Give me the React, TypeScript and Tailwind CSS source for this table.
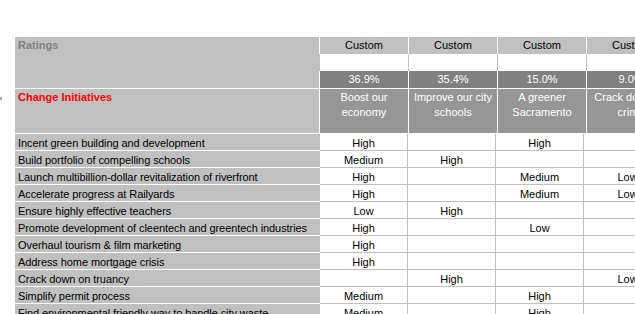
const COLUMNS = [
  { kind: 'Custom', pct: '36.9%', title: ['Boost our', 'economy'] },
  { kind: 'Custom', pct: '35.4%', title: ['Improve our city', 'schools'] },
  { kind: 'Custom', pct: '15.0%', title: ['A greener', 'Sacramento'] },
  { kind: 'Custom', pct: '9.0%', title: ['Crack down on', 'crime'] },
];

// 이니셔티브별 등급 (열 순서대로)
const ROWS: [string, string[]][] = [
  ['Incent green building and development', ['High', '', 'High', '']],
  ['Build portfolio of compelling schools', ['Medium', 'High', '', '']],
  ['Launch multibillion-dollar revitalization of riverfront', ['High', '', 'Medium', 'Low']],
  ['Accelerate progress at Railyards', ['High', '', 'Medium', 'Low']],
  ['Ensure highly effective teachers', ['Low', 'High', '', '']],
  ['Promote development of cleentech and greentech industries', ['High', '', 'Low', '']],
  ['Overhaul tourism & film marketing', ['High', '', '', '']],
  ['Address home mortgage crisis', ['High', '', '', '']],
  ['Crack down on truancy', ['', 'High', '', 'Low']],
  ['Simplify permit process', ['Medium', '', 'High', '']],
  ['Find environmental friendly way to handle city waste', ['Medium', '', 'High', '']],
];

function HeaderBlock() {
  return (
    <div className="flex flex-col">
      {/* Ratings 영역 */}
      <div className="flex">
        <div className="w-[304px] h-[51px] bg-[#c0c0c0] pl-[3px] pt-[1px] font-bold text-[#808080] leading-[14px]">
          Ratings
        </div>
        {COLUMNS.map((c, i) => (
          <div key={i} className="flex flex-col w-[89px] shrink-0 border-l border-white">
            <div className="h-[17px] bg-[#c0c0c0] text-center text-black leading-[17px]">{c.kind}</div>
            <div className="h-[17px] bg-white border-l border-[#c0c0c0] -ml-px"></div>
            <div className="h-[17px] bg-[#808080] text-center text-white leading-[17px]">{c.pct}</div>
          </div>
        ))}
      </div>
      <div className="h-px bg-white"></div>
      {/* 열 제목 */}
      <div className="flex">
        <div className="w-[304px] h-[44px] bg-[#c0c0c0] pl-[3px] font-bold text-[#ff0000] leading-[15px] pt-[1px]">
          Change Initiatives
        </div>
        {COLUMNS.map((c, i) => (
          <div
            key={i}
            className="w-[89px] shrink-0 h-[44px] border-l border-white bg-[#969696] text-center text-white leading-[15px] pt-[1px] whitespace-nowrap"
          >
            {c.title[0]}
            <br />
            {c.title[1]}
          </div>
        ))}
      </div>
      <div className="h-px bg-white"></div>
    </div>
  );
}

function DataRow({ label, values }: { label: string; values: string[] }) {
  return (
    <div className="flex">
      <div className="w-[305px] h-[17px] bg-[#c0c0c0] border-b border-white pl-[3px] pt-px leading-[16px] text-black whitespace-nowrap tracking-[-0.08px]">
        {label}
      </div>
      {values.map((v, i) => (
        <div
          key={i}
          className="w-[88px] shrink-0 h-[17px] bg-white border-b border-r border-[#c0c0c0] text-center pt-px leading-[16px] text-black"
        >
          {v}
        </div>
      ))}
    </div>
  );
}

export default function App() {
  return (
    <div
      className="w-[635px] h-[314px] overflow-hidden bg-white text-[11px]"
      style={{ fontFamily: '"Liberation Sans", Arial, sans-serif' }}
    >
      <div className="flex pt-[37px]">
        <div className="w-[15px] shrink-0 pt-[60px]">
          <div className="w-[2px] h-[3px] bg-[#9aaccc]"></div>
        </div>
        <div className="flex flex-col shrink-0">
          <HeaderBlock />
          {ROWS.map(([label, values], i) => (
            <DataRow key={i} label={label} values={values} />
          ))}
        </div>
      </div>
    </div>
  );
}
